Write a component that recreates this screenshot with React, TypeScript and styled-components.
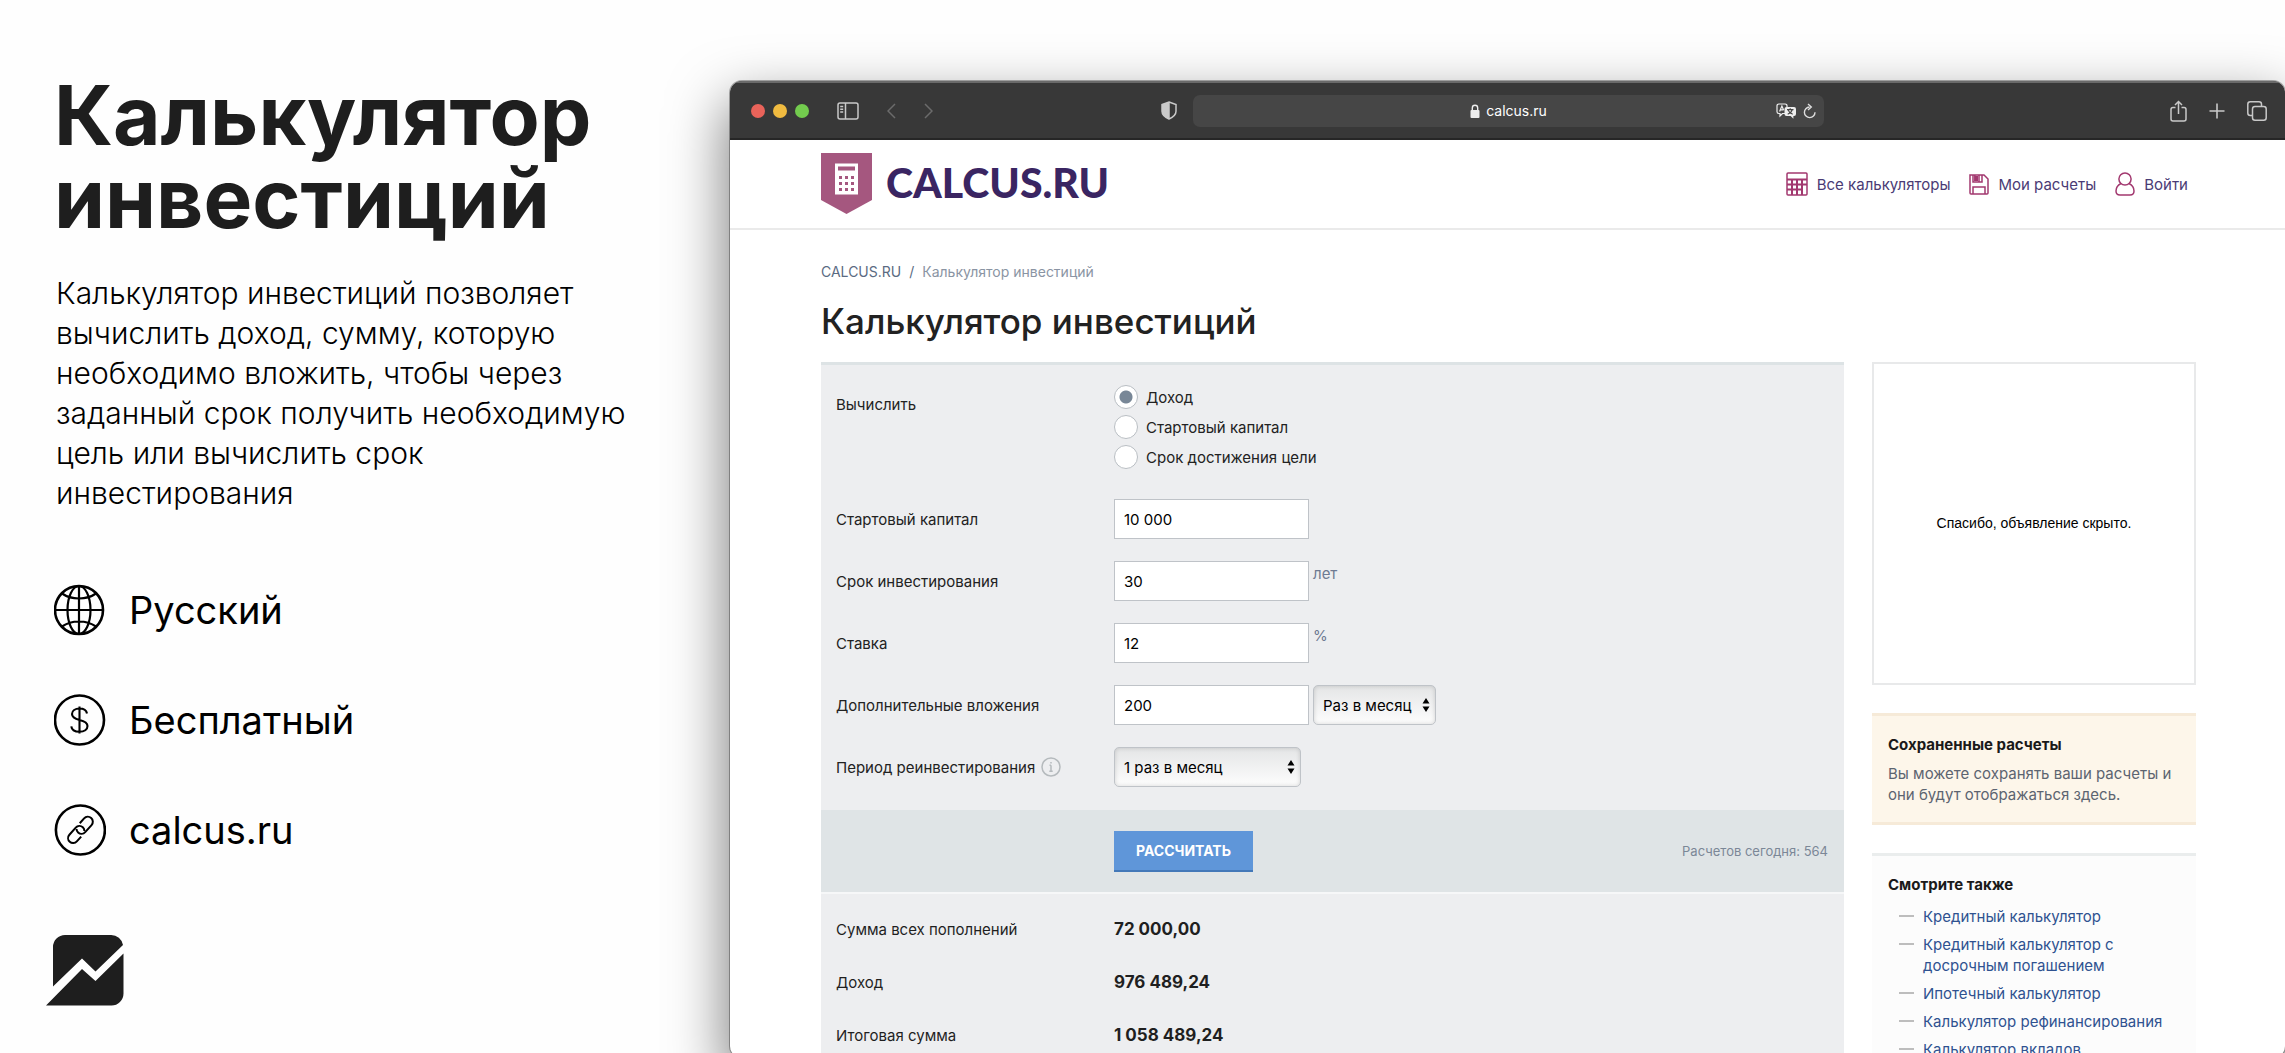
import React from "react";
import styled, { createGlobalStyle } from "styled-components";

const Global = createGlobalStyle`
  *, *::before, *::after { box-sizing: border-box; }
  body { margin: 0; background: #fefefe; color: #1f1f1f; font-family: Inter, "Liberation Sans", sans-serif; font-size: 15px; line-height: 21px; }
  h1, h2, h3, p, ul, dl, dd { margin: 0; padding: 0; }
  button, input, select { font-family: inherit; }
  a { text-decoration: none; }
`;

const Page = styled.div`
  display: flex;
  height: 100vh;
  min-height: 1053px;
  overflow: hidden;
`;

/* ---------- promo column ---------- */
const Promo = styled.aside`
  flex: 0 0 730px;
  padding: 74px 84px 44px 54px;
  display: flex;
  flex-direction: column;
`;
const PromoTitle = styled.h1`
  font-size: 82px;
  line-height: 83px;
  font-weight: 700;
  color: #1e1e1e;
`;
const PromoText = styled.p`
  margin-top: 33px;
  padding-left: 2px;
  font-size: 30px;
  line-height: 40px;
  font-weight: 300;
  color: #000;
`;
const Features = styled.ul`
  list-style: none;
  margin-top: 71px;
  display: flex;
  flex-direction: column;
  gap: 58px;
`;
const Feature = styled.li`
  display: flex;
  align-items: center;
  gap: 23px;
  font-size: 38px;
  line-height: 52px;
  color: #000;
  svg { flex: none; width: 52px; height: 52px; }
`;
const BrandMark = styled.svg`
  display: block;
  flex: none;
  width: 78px;
  height: 72px;
  margin: 78px 0 0 -8px;
  fill: #1e1e1e;
`;

/* ---------- browser window ---------- */
const Browser = styled.div`
  flex: 1;
  min-width: 0;
  margin: 81px 0 -5px;
  border-radius: 12px;
  background: #fff;
  display: flex;
  flex-direction: column;
  box-shadow: 0 0 0 1px rgba(0, 0, 0, 0.3), 0 24px 56px 4px rgba(0, 0, 0, 0.5);
  overflow: hidden;
`;
const Toolbar = styled.div`
  flex: none;
  height: 59px;
  display: grid;
  grid-template-columns: 410fr 663fr 443fr;
  align-items: center;
  padding: 0 18px 0 21px;
  background: #383838;
  border-top: 2px solid #6a6a6a;
  border-bottom: 2px solid #262626;
  color: #c9c9c9;
`;
const ToolGroup = styled.div<{ $end?: boolean }>`
  display: flex;
  align-items: center;
  justify-content: ${(p) => (p.$end ? "flex-end" : "flex-start")};
  gap: ${(p) => (p.$end ? "22px" : "28px")};
`;
const Lights = styled.div`
  display: flex;
  gap: 8px;
`;
const Light = styled.span<{ $c: string }>`
  width: 14px;
  height: 14px;
  border-radius: 50%;
  background: ${(p) => p.$c};
`;
const Tool = styled.button<{ $dim?: boolean }>`
  display: flex;
  padding: 0;
  border: 0;
  background: none;
  color: ${(p) => (p.$dim ? "#6b6b6b" : "#c9c9c9")};
`;
const AddressArea = styled.div`
  display: flex;
  align-items: center;
  gap: 16px;
`;
const Address = styled.div`
  flex: 1;
  height: 32px;
  border-radius: 7px;
  background: #464646;
  color: #fff;
  display: grid;
  grid-template-columns: 1fr auto 1fr;
  align-items: center;
  padding: 0 8px;
  font-size: 14px;
`;
const Host = styled.span`
  grid-column: 2;
  display: flex;
  align-items: center;
  gap: 6px;
`;
const AddressTools = styled.span`
  display: flex;
  justify-content: flex-end;
  align-items: center;
  gap: 7px;
`;

/* ---------- site ---------- */
const SiteHeader = styled.header`
  flex: none;
  height: 90px;
  padding: 0 97px 0 91px;
  border-bottom: 2px solid #eaeaea;
  display: flex;
  align-items: center;
  justify-content: space-between;
`;
const Logo = styled.a`
  display: flex;
  align-items: center;
  gap: 14px;
  padding-bottom: 2px;
  font-family: Lato, "Liberation Sans", sans-serif;
  font-size: 41px;
  line-height: 48px;
  font-weight: 900;
  color: #3a2562;
`;
const Nav = styled.nav`
  display: flex;
  gap: 19px;
`;
const NavLink = styled.a`
  display: flex;
  align-items: center;
  gap: 9px;
  color: #4a3b75;
  svg { color: #a2386f; }
`;
const Content = styled.div`
  flex: 1;
  min-height: 0;
  padding: 31px 89px 0 91px;
`;
const Crumbs = styled.nav`
  display: flex;
  gap: 8px;
  font-size: 14px;
  color: #8a94a3;
  a { color: #5b6b82; }
  span { color: #5b6b82; }
`;
const Heading = styled.h2`
  margin: 15px 0 17px;
  font-size: 35px;
  line-height: 48px;
  font-weight: 500;
  color: #222;
`;
const Columns = styled.div`
  display: flex;
  align-items: flex-start;
  gap: 28px;
`;
const Form = styled.form`
  flex: 1;
  min-width: 0;
  background: #edeef0;
  border-top: 3px solid #dde3e5;
`;
const Fields = styled.div`
  padding: 20px 15px 23px;
  display: flex;
  flex-direction: column;
  gap: 22px;
`;
const Row = styled.div<{ $top?: boolean }>`
  display: grid;
  grid-template-columns: 278px 1fr;
  align-items: ${(p) => (p.$top ? "start" : "center")};
`;
const Label = styled.label`
  display: flex;
  align-items: center;
  gap: 6px;
  color: #222;
`;
const GroupLabel = styled.span`
  padding-top: 9px;
  color: #222;
`;
const RadioList = styled.div`
  display: flex;
  flex-direction: column;
  gap: 6px;
  padding-bottom: 8px;
`;
const RadioLabel = styled.label`
  display: flex;
  align-items: center;
  gap: 8px;
  height: 24px;
  color: #222;
`;
const Radio = styled.input`
  appearance: none;
  margin: 0;
  width: 24px;
  height: 24px;
  border: 1px solid #b9bec3;
  border-radius: 50%;
  background: #fff;
  &:checked { background: radial-gradient(circle, #788797 0 6px, #fff 7px); }
`;
const Control = styled.div`
  display: flex;
  gap: 4px;
  height: 40px;
`;
const Field = styled.input`
  width: 195px;
  height: 40px;
  padding: 0 9px;
  border: 1px solid #bfc3c8;
  background: #fff;
  font-size: 15px;
  color: #000;
`;
const Unit = styled.span`
  padding-top: 2px;
  color: #6d7a92;
`;
const Picker = styled.div<{ $w: number }>`
  position: relative;
  width: ${(p) => p.$w}px;
  svg { position: absolute; right: 6px; top: 13px; pointer-events: none; }
`;
const Select = styled.select`
  appearance: none;
  width: 100%;
  height: 40px;
  padding: 0 9px;
  border: 1px solid #bfc3c8;
  border-radius: 5px;
  background: linear-gradient(#e4e5e6, #fdfdfd);
  box-shadow: inset 0 0 4px rgba(0, 0, 0, 0.16);
  font-size: 15px;
  color: #000;
`;
const Actions = styled.div`
  display: flex;
  align-items: center;
  justify-content: space-between;
  padding: 21px 16px 20px 293px;
  background: #dfe4e6;
  border-bottom: 2px solid #f6f7f8;
`;
const Submit = styled.button`
  height: 41px;
  padding: 0 22px;
  border: 0;
  border-bottom: 2px solid #4378b8;
  background: #5f96d9;
  color: #fff;
  font-size: 14px;
  font-weight: 700;
`;
const Counter = styled.span`
  font-size: 13px;
  color: #7b8797;
`;
const Results = styled.dl`
  padding: 25px 15px 32px;
  display: flex;
  flex-direction: column;
  gap: 32px;
`;
const ResultValue = styled.dd`
  font-size: 17px;
  font-weight: 700;
`;
const Side = styled.aside`
  flex: 0 0 324px;
`;
const Ad = styled.div`
  height: 323px;
  border: 2px solid #e8e9ea;
  display: flex;
  align-items: center;
  justify-content: center;
  font-family: "Liberation Sans", sans-serif;
  font-size: 14px;
  color: #000;
`;
const Saved = styled.section`
  margin-top: 28px;
  padding: 18px 16px 17px;
  background: #fdf6ea;
  border: solid #f6ead8;
  border-width: 3px 0;
  color: #5c6470;
`;
const SideTitle = styled.h3`
  margin-bottom: 8px;
  font-size: 15px;
  line-height: 21px;
  font-weight: 700;
  color: #1a1a1a;
`;
const SeeAlso = styled.section`
  margin-top: 28px;
  padding: 18px 16px;
  background: #fcfcfc;
  border-top: 3px solid #eaeded;
`;
const Links = styled.ul`
  list-style: none;
  display: flex;
  flex-direction: column;
  gap: 7px;
  margin-top: 11px;
`;
const LinkItem = styled.li`
  display: flex;
  gap: 9px;
  padding-left: 11px;
  &::before { content: ""; flex: none; width: 15px; height: 2px; margin-top: 9px; background: #bdbdbd; }
  a { color: #2f5290; }
`;

/* ---------- icons ---------- */
const Globe = () => (
  <svg viewBox="0 0 52 52" fill="none" stroke="#000" strokeWidth="2.2">
    <circle cx="25" cy="26" r="24" strokeWidth="2.6" />
    <ellipse cx="25" cy="26" rx="11.5" ry="24" />
    <path d="M25 2v48M1 26h48M8 9.500c5 3.500 10 5 17 5s12-1.500 17-5M8 42.500c5-3.500 10-5 17-5s12 1.500 17 5" />
  </svg>
);
const Dollar = () => (
  <svg viewBox="0 0 52 52" fill="none" stroke="#000" strokeWidth="2.100">
    <circle cx="25.500" cy="26" r="24.500" strokeWidth="2.600" />
    <path d="M25.500 12.500v27M33 19.500c-.6-3.200-3.400-5-7.500-5-4.300 0-7.500 2.200-7.500 5.600 0 3.400 2.600 4.700 7.500 5.800 5 1.100 8 2.500 8 6 0 3.600-3.200 5.800-8 5.800-4.600 0-7.800-2-8.200-5.400" />
  </svg>
);
const LinkIcon = () => (
  <svg viewBox="0 0 52 52" fill="none" stroke="#000" strokeWidth="2">
    <circle cx="26.400" cy="26" r="24.500" strokeWidth="2.600" />
    <g transform="rotate(-48 26.400 26)">
      <path d="M22 31h-6.500a5 5 0 0 1-5-5 5 5 0 0 1 5-5H25a5 5 0 0 1 5 5 5 5 0 0 1-1.600 3.600" />
      <path d="M31 21h6.500a5 5 0 0 1 5 5 5 5 0 0 1-5 5H28a5 5 0 0 1-5-5 5 5 0 0 1 1.600-3.600" />
    </g>
  </svg>
);
const SidebarIcon = () => (
  <svg width="22" height="18" viewBox="0 0 22 18" fill="none" stroke="currentColor" strokeWidth="1.500">
    <rect x="1" y="1" width="20" height="16" rx="2" />
    <path d="M8.500 1v16M3.200 4.500h3M3.200 7.200h3M3.200 9.900h3" />
  </svg>
);
const Chevron = ({ right }: { right?: boolean }) => (
  <svg width="9" height="16" viewBox="0 0 9 16" fill="none" stroke="currentColor" strokeWidth="1.500">
    <path d={right ? "M1 1l7 7-7 7" : "M8 1L1 8l7 7"} />
  </svg>
);
const Shield = () => (
  <svg width="16" height="19" viewBox="0 0 16 19" fill="none" stroke="#c9c9c9" strokeWidth="1.500">
    <path d="M8 1l7 2.600v6.600c0 3.400-3 6-7 7.800-4-1.800-7-4.400-7-7.800V3.600z" />
    <path d="M8 1v17c-4-1.800-7-4.400-7-7.800V3.600z" fill="#c9c9c9" stroke="none" />
    <path d="M8 1v17" />
  </svg>
);
const Lock = () => (
  <svg width="10" height="14" viewBox="0 0 10 14" fill="#eee">
    <rect x="0.500" y="6" width="9" height="8" rx="1" />
    <path d="M2.300 6.500V4a2.700 2.700 0 0 1 5.400 0v2.500" fill="none" stroke="#eee" strokeWidth="1.400" />
  </svg>
);
const Translate = () => (
  <svg width="20" height="16" viewBox="0 0 20 16" fill="none" stroke="#eee" strokeWidth="1.200">
    <path d="M9 10.500H6.500L4 13v-2.500H2.800A1.800 1.800 0 0 1 1 8.700V2.800A1.800 1.800 0 0 1 2.800 1h6.400A1.800 1.800 0 0 1 11 2.800V4" />
    <path d="M3.600 8.500l2.300-5.500 1.800 4.200M4.500 6.800h2.700" />
    <path d="M10.500 4H18a2 2 0 0 1 2 2v5a2 2 0 0 1-2 2h-.6v2.800L14.600 13h-4.100a2 2 0 0 1-2-2V6a2 2 0 0 1 2-2z" fill="#eee" stroke="none" />
    <path d="M11 6.700h6.500M14.200 5.300v1.400M16.300 6.700c-.6 2-2.400 3.700-4.600 4.600M12 6.900c.8 2 2.600 3.600 4.700 4.400" stroke="#464646" />
  </svg>
);
const Reload = () => (
  <svg width="13" height="16" viewBox="0 0 13 16" fill="none" stroke="#ddd" strokeWidth="1.400">
    <path d="M6.500 4a5.300 5.300 0 1 0 5.500 5.300" />
    <path d="M5 1l3.300 3-3.300 3" />
  </svg>
);
const Share = () => (
  <svg width="17" height="22" viewBox="0 0 17 22" fill="none" stroke="currentColor" strokeWidth="1.500">
    <path d="M5.500 7.500H3a2 2 0 0 0-2 2V19a2 2 0 0 0 2 2h11a2 2 0 0 0 2-2V9.500a2 2 0 0 0-2-2h-2.500M8.500 14V1.500M5 5l3.500-3.500L12 5" />
  </svg>
);
const Plus = () => (
  <svg width="16" height="16" viewBox="0 0 16 16" stroke="currentColor" strokeWidth="1.600">
    <path d="M8 0.500v15M0.500 8h15" />
  </svg>
);
const Tabs = () => (
  <svg width="20" height="20" viewBox="0 0 20 20" fill="none" stroke="currentColor" strokeWidth="1.500">
    <rect x="5.500" y="5.500" width="13.700" height="13.700" rx="2.500" />
    <path d="M5.500 14.500H3.300A2.500 2.500 0 0 1 .8 12V3.300A2.500 2.500 0 0 1 3.300.8H12a2.500 2.500 0 0 1 2.500 2.500v2.200" />
  </svg>
);
const dots = [0, 1, 2];
const LogoMark = () => (
  <svg width="51" height="61" viewBox="0 0 51 61">
    <path d="M0 0h51v47L25.500 61 0 47z" fill="#a5577f" />
    <rect x="14" y="10.500" width="23" height="31" fill="#fff" />
    <rect x="17" y="13.500" width="17" height="4" fill="#a5577f" />
    {dots.map((r) => dots.map((c) => (
      <rect key={`${r}${c}`} x={18 + c * 6} y={23 + r * 6} width="3" height="3" fill="#a5577f" />
    )))}
  </svg>
);
const CalcIcon = () => (
  <svg width="22" height="24" viewBox="0 0 22 24" fill="none" stroke="currentColor" strokeWidth="1.500">
    <rect x="1" y="1" width="20" height="22" rx="1" />
    <path d="M1 7.500h20M1 12.500h20M1 17.500h15M6 7.500V23M11 7.500V23M16 7.500V23" strokeWidth="2" />
  </svg>
);
const Floppy = () => (
  <svg width="20" height="21" viewBox="0 0 20 21" fill="none" stroke="currentColor" strokeWidth="1.500">
    <path d="M1 1h14l4 4v14a1 1 0 0 1-1 1H2a1 1 0 0 1-1-1z" />
    <path d="M4 1v7h9V1M5.800 1v6M10 1v7M4 20v-7h12v7" />
    <path d="M6 2h3v5H6z" fill="currentColor" stroke="none" />
  </svg>
);
const User = () => (
  <svg width="20" height="24" viewBox="0 0 20 24" fill="none" stroke="currentColor" strokeWidth="1.500">
    <circle cx="10" cy="7" r="6.100" />
    <path d="M6 11.500C3 13 1 15.800 1 19c0 2.600 1.400 4 4 4h10c2.600 0 4-1.400 4-4 0-3.200-2-6-5-7.500" />
  </svg>
);
const Info = () => (
  <svg width="20" height="20" viewBox="0 0 20 20" fill="none" stroke="#b5babd" strokeWidth="1.500">
    <circle cx="10" cy="10" r="9" />
    <path d="M10 8.300v6M8.500 8.300H10M8.300 14.300h3.400M10 5v1.500" />
  </svg>
);
const Arrows = () => (
  <svg width="8" height="14" viewBox="0 0 8 14">
    <path d="M4 0l3.500 5.500h-7zM4 14L.5 8.500h7z" />
  </svg>
);

const radios = ["Доход", "Стартовый капитал", "Срок достижения цели"];
const results = [
  ["Сумма всех пополнений", "72 000,00"],
  ["Доход", "976 489,24"],
  ["Итоговая сумма", "1 058 489,24"],
];
const links = [
  "Кредитный калькулятор",
  "Кредитный калькулятор с досрочным погашением",
  "Ипотечный калькулятор",
  "Калькулятор рефинансирования",
  "Калькулятор вкладов",
];

export default function App() {
  return (
    <Page>
      <Global />
      <Promo>
        <PromoTitle>Калькулятор инвестиций</PromoTitle>
        <PromoText>
          Калькулятор инвестиций позволяет вычислить доход, сумму, которую необходимо вложить, чтобы через
          заданный срок получить необходимую цель или вычислить срок инвестирования
        </PromoText>
        <Features>
          <Feature><Globe />Русский</Feature>
          <Feature><Dollar />Бесплатный</Feature>
          <Feature><LinkIcon />calcus.ru</Feature>
        </Features>
        <BrandMark viewBox="0 0 78 72">
          <path d="M7 52.500V13A12 12 0 0 1 19 1h46a12 12 0 0 1 12 10L49.500 37.500 36 24.500z" />
          <path d="M0 71.500L36 35l13.500 12L77.500 19.500V59.500a12 12 0 0 1-12 12z" />
        </BrandMark>
      </Promo>

      <Browser>
        <Toolbar>
          <ToolGroup>
            <Lights>
              <Light $c="#e9635a" />
              <Light $c="#f0bb40" />
              <Light $c="#73cc4e" />
            </Lights>
            <Tool aria-label="Боковая панель"><SidebarIcon /></Tool>
            <Tool $dim aria-label="Назад"><Chevron /></Tool>
            <Tool $dim aria-label="Вперёд"><Chevron right /></Tool>
          </ToolGroup>
          <AddressArea>
            <Shield />
            <Address>
              <Host><Lock />calcus.ru</Host>
              <AddressTools><Translate /><Reload /></AddressTools>
            </Address>
          </AddressArea>
          <ToolGroup $end>
            <Tool aria-label="Поделиться"><Share /></Tool>
            <Tool aria-label="Новая вкладка"><Plus /></Tool>
            <Tool aria-label="Все вкладки"><Tabs /></Tool>
          </ToolGroup>
        </Toolbar>

        <SiteHeader>
          <Logo href="#"><LogoMark />CALCUS.RU</Logo>
          <Nav>
            <NavLink href="#"><CalcIcon />Все калькуляторы</NavLink>
            <NavLink href="#"><Floppy />Мои расчеты</NavLink>
            <NavLink href="#"><User />Войти</NavLink>
          </Nav>
        </SiteHeader>

        <Content>
          <Crumbs><a href="#">CALCUS.RU</a><span>/</span>Калькулятор инвестиций</Crumbs>
          <Heading>Калькулятор инвестиций</Heading>
          <Columns>
            <Form onSubmit={(e) => e.preventDefault()}>
              <Fields>
                <Row $top role="radiogroup" aria-labelledby="mode">
                  <GroupLabel id="mode">Вычислить</GroupLabel>
                  <RadioList>
                    {radios.map((r, i) => (
                      <RadioLabel key={r}>
                        <Radio type="radio" name="mode" defaultChecked={i === 0} />
                        {r}
                      </RadioLabel>
                    ))}
                  </RadioList>
                </Row>
                <Row>
                  <Label htmlFor="capital">Стартовый капитал</Label>
                  <Control><Field id="capital" defaultValue="10 000" /></Control>
                </Row>
                <Row>
                  <Label htmlFor="term">Срок инвестирования</Label>
                  <Control><Field id="term" defaultValue="30" /><Unit>лет</Unit></Control>
                </Row>
                <Row>
                  <Label htmlFor="rate">Ставка</Label>
                  <Control><Field id="rate" defaultValue="12" /><Unit>%</Unit></Control>
                </Row>
                <Row>
                  <Label htmlFor="extra">Дополнительные вложения</Label>
                  <Control>
                    <Field id="extra" defaultValue="200" />
                    <Picker $w={123}>
                      <Select aria-label="Частота вложений"><option>Раз в месяц</option></Select>
                      <Arrows />
                    </Picker>
                  </Control>
                </Row>
                <Row>
                  <Label htmlFor="period">Период реинвестирования <Info /></Label>
                  <Control>
                    <Picker $w={187}>
                      <Select id="period"><option>1 раз в месяц</option></Select>
                      <Arrows />
                    </Picker>
                  </Control>
                </Row>
              </Fields>
              <Actions>
                <Submit type="submit">РАССЧИТАТЬ</Submit>
                <Counter>Расчетов сегодня: 564</Counter>
              </Actions>
              <Results>
                {results.map(([k, v]) => (
                  <Row key={k}>
                    <dt>{k}</dt>
                    <ResultValue>{v}</ResultValue>
                  </Row>
                ))}
              </Results>
            </Form>
            <Side>
              <Ad>Спасибо, объявление скрыто.</Ad>
              <Saved>
                <SideTitle>Сохраненные расчеты</SideTitle>
                <p>Вы можете сохранять ваши расчеты и они будут отображаться здесь.</p>
              </Saved>
              <SeeAlso>
                <SideTitle>Смотрите также</SideTitle>
                <Links>
                  {links.map((l) => (
                    <LinkItem key={l}><a href="#">{l}</a></LinkItem>
                  ))}
                </Links>
              </SeeAlso>
            </Side>
          </Columns>
        </Content>
      </Browser>
    </Page>
  );
}
